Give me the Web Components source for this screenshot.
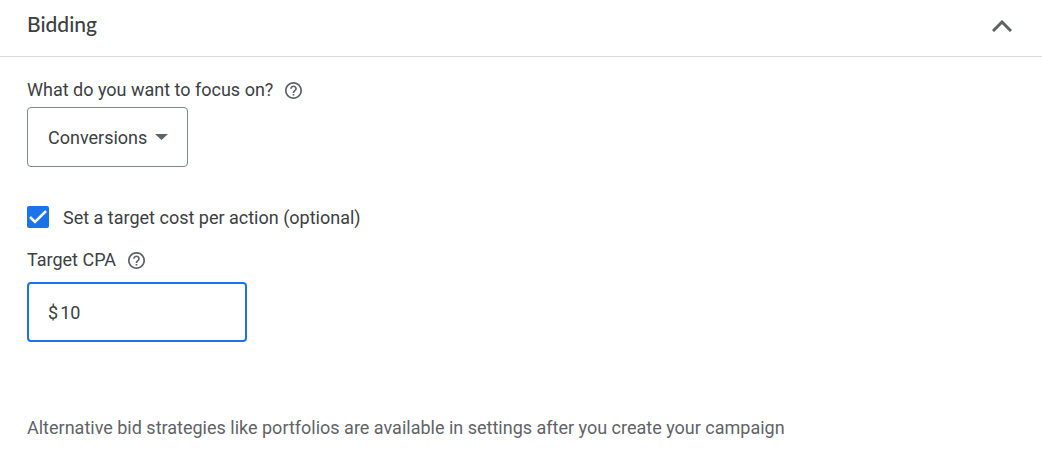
<!DOCTYPE html>
<html lang="en">
<head>
  <meta charset="utf-8" />
  <meta name="viewport" content="width=device-width, initial-scale=1" />
  <title>Bidding</title>
  <style>
    body {
      margin: 0;
      background-color: #ffffff;
      color: #3c4043;
      font: 18px/24px Roboto, "Liberation Sans", sans-serif;
      --blue: #1a73e8;
      --gray: #5f6368;
      --line: #dadce0;
      --outline: #80868b;
    }
  </style>
</head>
<body>

  <template id="panel-template">
    <style>
      :host {
        display: block;
      }
      header {
        display: flex;
        align-items: center;
        justify-content: space-between;
        height: 56px;
        padding: 0 26px 4px 27px;
        box-sizing: border-box;
      }
      h2 {
        margin: 0;
        padding-bottom: 4px;
        font: 500 21px/24px Lato, Roboto, sans-serif;
      }
      button {
        display: flex;
        padding: 4px;
        border: 0;
        background: none;
        color: var(--gray);
        cursor: pointer;
      }
      .content {
        display: flex;
        flex-direction: column;
        align-items: flex-start;
        padding: 21px 27px 12px;
        border-top: 1px solid var(--line);
      }
      .content[hidden] {
        display: none;
      }
    </style>
    <header>
      <h2><slot name="title"></slot></h2>
      <button type="button" aria-label="Collapse" aria-expanded="true">
        <svg width="20" height="12" viewBox="0 0 20 12" fill="none" stroke="currentColor" stroke-width="3">
          <path d="M1 11L10 2L19 11" />
        </svg>
      </button>
    </header>
    <div class="content"><slot></slot></div>
  </template>

  <template id="help-template">
    <style>
      :host {
        display: inline-flex;
      }
      button {
        display: flex;
        padding: 0;
        border: 0;
        background: none;
        color: var(--gray);
        cursor: pointer;
      }
    </style>
    <button type="button" aria-label="Help">
      <svg width="17" height="17" viewBox="2 2 20 20" fill="currentColor">
        <path d="M11 18h2v-2h-2v2zm1-16C6.480 2 2 6.480 2 12s4.480 10 10 10 10-4.480 10-10S17.520 2 12 2zm0 18c-4.410 0-8-3.590-8-8s3.590-8 8-8 8 3.590 8 8-3.590 8-8 8zm0-14c-2.210 0-4 1.790-4 4h2c0-1.100.9-2 2-2s2 .9 2 2c0 2-3 1.750-3 5h2c0-2.250 3-2.500 3-5 0-2.210-1.790-4-4-4z" />
      </svg>
    </button>
  </template>

  <template id="select-template">
    <style>
      :host {
        display: block;
        margin-bottom: 39px;
      }
      .caption {
        display: flex;
        align-items: center;
        gap: 12px;
        margin-bottom: 5px;
      }
      .box {
        display: inline-grid;
        align-items: center;
        vertical-align: top;
      }
      select, svg {
        grid-area: 1 / 1;
      }
      select {
        appearance: none;
        height: 60px;
        margin: 0;
        padding: 2px 39px 0 20px;
        border: 1px solid var(--outline);
        border-radius: 4px;
        background: none;
        color: inherit;
        font: inherit;
      }
      svg {
        justify-self: end;
        margin-right: 20px;
        color: var(--gray);
        pointer-events: none;
      }
    </style>
    <div class="caption">
      <label for="focus"><slot></slot></label>
      <help-icon></help-icon>
    </div>
    <div class="box">
      <select id="focus"></select>
      <svg width="13" height="6" viewBox="0 0 13 6" fill="currentColor"><path d="M0 0h13L6.500 6z" /></svg>
    </div>
  </template>

  <template id="check-template">
    <style>
      :host {
        display: block;
        margin-bottom: 18px;
      }
      label {
        display: flex;
        align-items: flex-start;
        gap: 14px;
      }
      .box {
        display: grid;
        place-items: center;
      }
      input, svg {
        grid-area: 1 / 1;
      }
      input {
        appearance: none;
        width: 22px;
        height: 22px;
        margin: 0;
        border: 2px solid var(--gray);
        border-radius: 2px;
      }
      input:checked {
        border-color: var(--blue);
        background-color: var(--blue);
      }
      svg {
        pointer-events: none;
      }
      input:not(:checked) + svg {
        visibility: hidden;
      }
    </style>
    <label>
      <span class="box">
        <input type="checkbox" checked />
        <svg width="18" height="14" viewBox="0 0 18 14" fill="none" stroke="#ffffff" stroke-width="2.500">
          <path d="M1 7L6 12L17 1" />
        </svg>
      </span>
      <slot></slot>
    </label>
  </template>

  <template id="money-template">
    <style>
      :host {
        display: block;
        margin-bottom: 74px;
      }
      .caption {
        display: flex;
        align-items: center;
        gap: 12px;
        margin-bottom: 10px;
      }
      .field {
        display: flex;
        align-items: center;
        gap: 2px;
        width: 220px;
        height: 60px;
        padding: 2px 19px 0;
        box-sizing: border-box;
        border: 2px solid var(--blue);
        border-radius: 4px;
      }
      input {
        flex: 1;
        min-width: 0;
        padding: 0;
        border: 0;
        outline: 0;
        background: none;
        color: inherit;
        font: inherit;
      }
    </style>
    <div class="caption">
      <label for="amount"><slot></slot></label>
      <help-icon></help-icon>
    </div>
    <div class="field">
      <span>$</span>
      <input id="amount" type="text" inputmode="decimal" />
    </div>
  </template>

  <template id="note-template">
    <style>
      :host {
        display: block;
        color: var(--gray);
      }
    </style>
    <slot></slot>
  </template>

  <bidding-panel>
    <span slot="title">Bidding</span>
    <select-field options="Conversions">What do you want to focus on?</select-field>
    <check-field>Set a target cost per action (optional)</check-field>
    <money-field value="10">Target CPA</money-field>
    <panel-note>Alternative bid strategies like portfolios are available in settings after you create your campaign</panel-note>
  </bidding-panel>

  <script>
    class TemplateElement extends HTMLElement {
      constructor(id) {
        super();
        const template = document.getElementById(id);
        this.attachShadow({ mode: 'open' });
        this.shadowRoot.appendChild(document.importNode(template.content, true));
      }
    }

    class HelpIcon extends TemplateElement {
      constructor() {
        super('help-template');
      }
    }

    class BiddingPanel extends TemplateElement {
      constructor() {
        super('panel-template');
        const button = this.shadowRoot.querySelector('button');
        const content = this.shadowRoot.querySelector('.content');
        button.addEventListener('click', () => {
          content.hidden = !content.hidden;
          button.setAttribute('aria-expanded', String(!content.hidden));
          button.setAttribute('aria-label', content.hidden ? 'Expand' : 'Collapse');
          button.style.transform = content.hidden ? 'rotate(180deg)' : '';
        });
      }
    }

    class SelectField extends TemplateElement {
      constructor() {
        super('select-template');
      }
      connectedCallback() {
        const select = this.shadowRoot.querySelector('select');
        const names = (this.getAttribute('options') || '').split(',');
        select.replaceChildren(...names.map(name => new Option(name)));
      }
    }

    class CheckField extends TemplateElement {
      constructor() {
        super('check-template');
      }
    }

    class MoneyField extends TemplateElement {
      constructor() {
        super('money-template');
      }
      connectedCallback() {
        this.shadowRoot.querySelector('input').value = this.getAttribute('value') || '';
      }
    }

    class PanelNote extends TemplateElement {
      constructor() {
        super('note-template');
      }
    }

    customElements.define('help-icon', HelpIcon);
    customElements.define('bidding-panel', BiddingPanel);
    customElements.define('select-field', SelectField);
    customElements.define('check-field', CheckField);
    customElements.define('money-field', MoneyField);
    customElements.define('panel-note', PanelNote);
  </script>
</body>
</html>
